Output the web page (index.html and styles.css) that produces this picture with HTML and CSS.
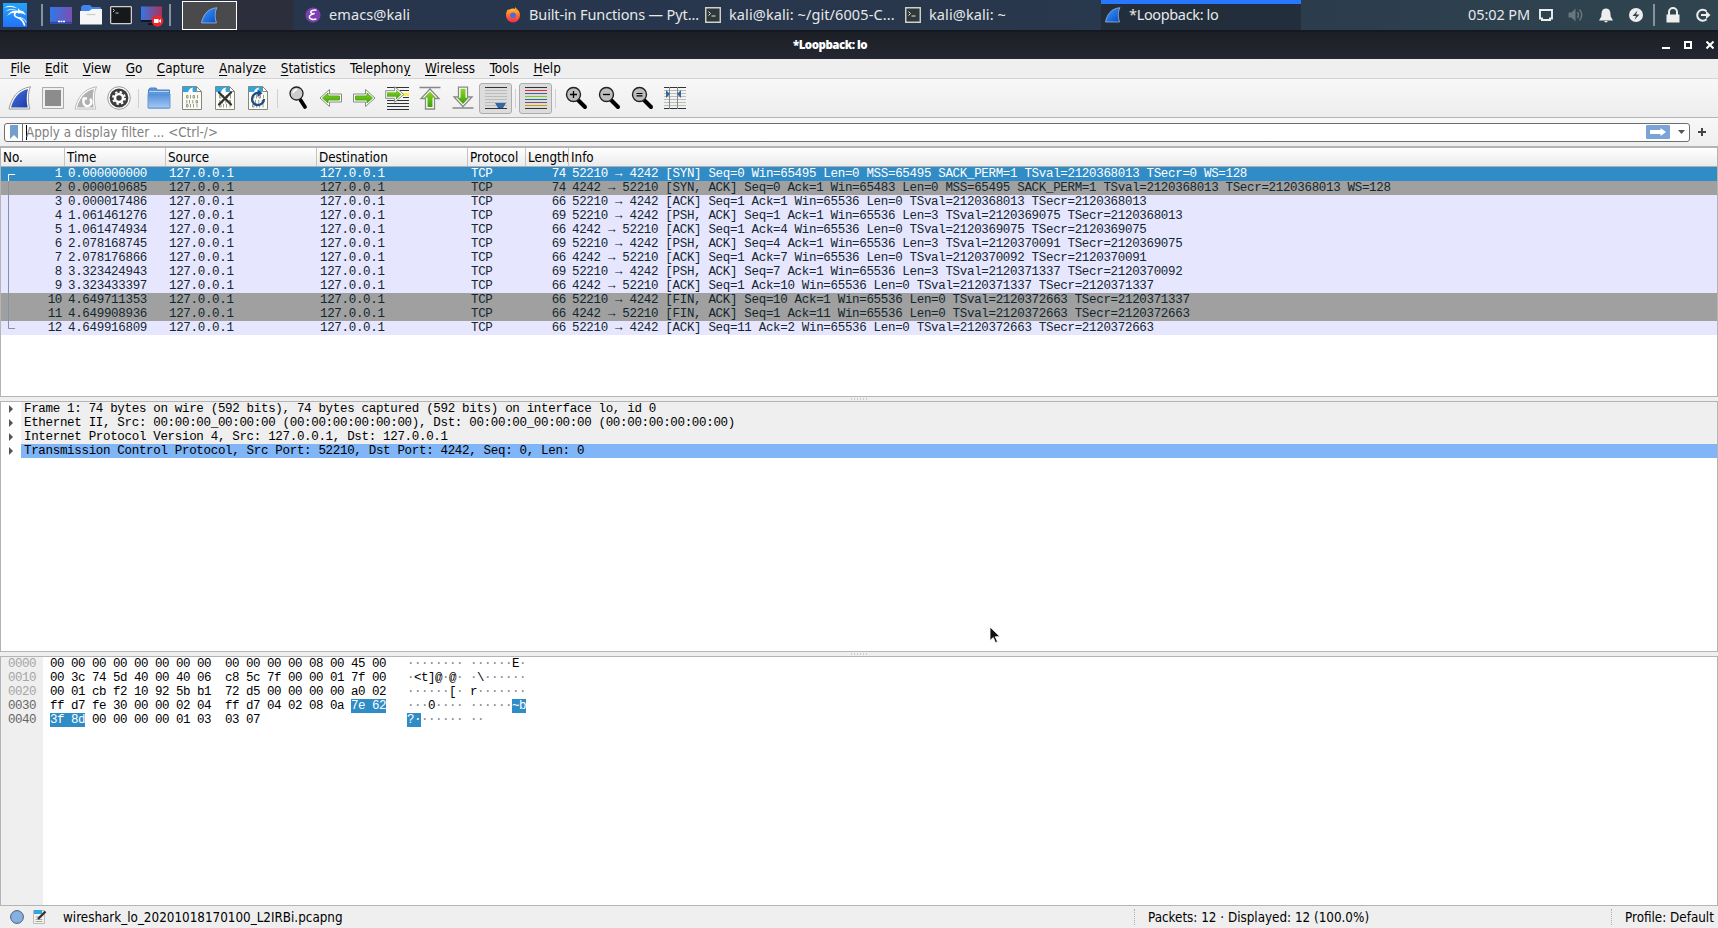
FILE: index.html
```html
<!DOCTYPE html>
<html lang="en">
<head>
    <meta charset="UTF-8">
    <title>*Loopback: lo</title>
    <link rel="stylesheet" href="styles.css">
</head>
<body>
    <!-- shared icon shapes -->
    <svg class="defs" width="0" height="0">
        <defs>
            <linearGradient id="blue" x1="0" y1="0" x2="1" y2="1"><stop offset="0" stop-color="#4a76e0"/><stop offset="1" stop-color="#1c3aa6"/></linearGradient>
            <linearGradient id="fin" x1="0" y1="0" x2="1" y2="1"><stop offset="0" stop-color="#3ea0ff"/><stop offset="1" stop-color="#0648c8"/></linearGradient>
            <linearGradient id="screen" x1="0" y1="0" x2="1" y2="0"><stop offset="0" stop-color="#3178e8"/><stop offset="1" stop-color="#7a4fb0"/></linearGradient>
            <linearGradient id="screen2" x1="0" y1="0" x2="1" y2="0"><stop offset="0" stop-color="#3178e8"/><stop offset="1" stop-color="#b03058"/></linearGradient>
            <linearGradient id="kali" x1="0" y1="0" x2="0" y2="1"><stop offset="0" stop-color="#22a4f8"/><stop offset="1" stop-color="#2272fb"/></linearGradient>
            <linearGradient id="folder" x1="0" y1="0" x2="0" y2="1"><stop offset="0" stop-color="#4f8dd8"/><stop offset="1" stop-color="#a4c8f4"/></linearGradient>
            <linearGradient id="green" x1="0" y1="0" x2="0" y2="1"><stop offset="0" stop-color="#8ad52c"/><stop offset="1" stop-color="#3fa008"/></linearGradient>
            <linearGradient id="ff" x1="0" y1="0" x2="0" y2="1"><stop offset="0" stop-color="#ffc730"/><stop offset=".5" stop-color="#ff6a2b"/><stop offset="1" stop-color="#f0284f"/></linearGradient>
            <symbol id="doc" viewBox="0 0 24 24">
                <path d="M2.500 .5h14l5 5v18h-19z" fill="#fcfcf2" stroke="#82877f"/>
                <path d="M3 1h13v5H3z" fill="#2fa5e2"/>
                <path d="M8 6.500c.5-3 2.500-4.500 5-5-.7 1.500-.6 3 0 5z" fill="#fff"/>
                <path d="M16.500 .5v5h5z" fill="#fff" stroke="#82877f"/>
            </symbol>
            <symbol id="bits" viewBox="0 0 24 24">
                <g fill="none" stroke="#7d817a" stroke-width=".8">
                    <path d="M6.500 9.500h1.500v2.500H6.500zM10.500 9v3.500M13 9.500h1.500v2.500H13zM17.500 9v3.500M6.800 14v3.500M9.500 14v3.500M12.800 14v3.500M16 14.500h1.500v2.500H16zM6.500 18.500h1.500v2.500H6.500zM10.500 18v3.500M13.500 18v3.500M17 18v3.500"/>
                </g>
            </symbol>
            <symbol id="lens" viewBox="0 0 24 24">
                <path d="M14.500 14.500l6.500 6.500" stroke="#000" stroke-width="4" stroke-linecap="round"/>
                <circle cx="9.500" cy="8.500" r="7" fill="#bdbdbd" stroke="#222" stroke-width="1.400"/>
            </symbol>
            <symbol id="arrow" viewBox="0 0 24 24">
                <path d="M1 12l9.500-8.500v4.500h12v8h-12v4.500z" fill="#fff" stroke="#888" stroke-linejoin="round"/>
                <path d="M3.500 12l5.500-5v3h11.500v4H9v3z" fill="url(#green)" stroke="#55ad10"/>
            </symbol>
            <symbol id="term" viewBox="0 0 16 16">
                <path d="M.7 .7h14.600v14.600H.7z" fill="#30393a" stroke="#cfd0cc" stroke-width="1.500"/>
                <path d="M3.500 4.500l2 2-2 2M6.500 9h4" stroke="#e8e8e8" fill="none"/>
            </symbol>
            <symbol id="sharkfin" viewBox="0 0 16 16">
                <path d="M.5 15C2 7.500 6 1.500 15 .7c-2.200 4-2.200 9-.5 14.300z" fill="url(#fin)" stroke="#9fb4cf" stroke-width=".8"/>
            </symbol>
        </defs>
    </svg>

    <div class="panel">
        <svg class="logo" width="24" height="24" viewBox="0 0 24 24"><rect width="24" height="24" fill="url(#kali)"/><g fill="#fff"><path d="M1 4.800C5 2 10 1.800 14.500 5.500 10 3.700 5 3.500 1 4.800zM2 8.500c4-3 8-3.200 12-1.500-4-.5-8 0-12 1.500zM4 13c3-5 7-6 11-5.200 3-.3 5.500 1 8 4.200-3-1.500-5-2.200-7.500-2C11 9 7 10 4 13z"/><path d="M15 5l2 2.500 3 .5 2.500 3.500-4-1.500-3.500.5z"/></g><g fill="none" stroke="#fff" stroke-linecap="round"><path d="M13 9c-2.500 2-2 4.500 1.500 5.500S20 17 21.500 22" stroke-width="1.700"/><path d="M16.500 14.500c3.500.3 5.500 2 6.500 4.500" stroke-width=".9"/></g></svg>
        <i class="bar"></i>
        <svg width="22" height="22" viewBox="0 0 22 22"><rect y="3" width="22" height="17" fill="url(#screen)"/><path d="M0 18.800h22" stroke="#3346a0" stroke-width="2"/><path d="M8 17.500h2M10.500 17.500h2M13 17.500h2" stroke="#fff" stroke-width="1.500"/></svg>
        <svg width="22" height="22" viewBox="0 0 22 22"><path d="M1 11V3l2-2h7l2 2h8l1 1v7z" fill="#3f85ee"/><path d="M0 7h9l3-2h10v15.500H0z" fill="#f6f6f6"/><path d="M6.500 10.500h9" stroke="#ccc" stroke-width="1.200"/></svg>
        <svg width="22" height="22" viewBox="0 0 22 22"><rect x=".6" y="2.600" width="20.800" height="17" rx="1" fill="#17181a" stroke="#cfcfcf" stroke-width="1.300"/><path d="M3 5l1.500 1.500L3 8M5.500 9h3" stroke="#ddd" fill="none" stroke-width=".9"/></svg>
        <svg width="24" height="24" viewBox="0 0 24 24"><rect x="1" y="3.500" width="21" height="14" fill="url(#screen2)"/><path d="M1 18h21M8 21h6" stroke="#111722" stroke-width="1.800"/><circle cx="17.500" cy="18" r="5.800" fill="#e8272f"/><path d="M14 16h4.500v4H14zM18.500 18l2.500-2v4z" fill="#fff"/></svg>
        <i class="bar last"></i>
        <div class="workspace"><svg width="17" height="17"><use href="#sharkfin"/></svg></div>
        <div class="pager"></div>
        <div class="task first"><svg width="16" height="16" viewBox="0 0 16 16"><circle cx="8" cy="8" r="7.600" fill="#7b3fb0"/><path d="M11.500 3.200C8 2.800 5.500 3.600 5.700 5s2.500 1.800 4 1.600C7 7 4 8.300 4.400 10.300c.3 2 4 2.500 7 1.700" fill="none" stroke="#fff" stroke-width="1.500"/></svg><span class="wide">emacs@kali</span></div>
        <div class="task"><svg width="16" height="16" viewBox="0 0 16 16"><circle cx="8" cy="8.500" r="7" fill="url(#ff)"/><path d="M1.500 7c0-3 1-4 1.500-5 1 2 2 2 4 2zM10 0c1.500 2 4 3 4.500 6L10 5z" fill="#ff9a2e"/><circle cx="8" cy="8.300" r="2.900" fill="#5367d8"/></svg><span>Built-in Functions — Pyt...</span></div>
        <div class="task"><svg width="16" height="16"><use href="#term"/></svg><span class="wide">kali@kali: ~/git/6005-C...</span></div>
        <div class="task"><svg width="16" height="16"><use href="#term"/></svg><span class="wide">kali@kali: ~</span></div>
        <div class="task active"><svg width="16" height="16"><use href="#sharkfin"/></svg><span>*Loopback: lo</span></div>
        <div class="tray">
            <span class="clock">05:02 PM</span>
            <svg viewBox="0 0 30 31"><path d="M9 10h12v8.500h-2v1.500h-8v-1.500H9z" fill="none" stroke="#eee" stroke-width="1.900"/></svg>
            <svg viewBox="0 0 30 31" opacity=".3"><path d="M7.500 12.500h3l4-4v13l-4-4h-3z" fill="#eee"/><path d="M16.500 12q2 3 0 6M18.500 9.500q4.500 5.500 0 11" fill="none" stroke="#eee" stroke-width="1.500"/></svg>
            <svg viewBox="0 0 30 31"><path d="M15 8.500c4.500 0 4.500 4.500 4.700 8l2.300 4H8l2.300-4c.2-3.500.2-8 4.700-8zM13 21h4l-2 1.800z" fill="#eee"/></svg>
            <svg viewBox="0 0 30 31"><circle cx="15" cy="15" r="7" fill="#eee"/><path d="M16.500 10.500L11.500 16H15l-1.500 3.700 5-5.200H15z" fill="#2e414e"/></svg>
            <i class="bar"></i>
            <svg viewBox="0 0 30 31"><path d="M8.500 14.500h13v8h-13z" fill="#eee"/><path d="M11 15v-3a4 4 0 0 1 8 0v3" fill="none" stroke="#eee" stroke-width="2"/></svg>
            <svg viewBox="0 0 30 31"><path d="M18.500 11.200a5.500 5.500 0 1 0 0 8" fill="none" stroke="#eee" stroke-width="2"/><path d="M13 14h5v-3l4.500 4-4.500 4v-3h-5z" fill="#eee"/></svg>
        </div>
    </div>

    <div class="titlebar">
        <b>*Loopback: lo</b>
        <div class="buttons">
            <svg width="8" height="8"><path d="M0 7h8" stroke="#fff" stroke-width="2"/></svg>
            <svg width="8" height="8"><path d="M1 1h6v6H1z" fill="none" stroke="#fff" stroke-width="2"/></svg>
            <svg width="8" height="8"><path d="M.5.5l7 7M7.500.5l-7 7" stroke="#fff" stroke-width="2"/></svg>
        </div>
    </div>

    <div class="menubar">
        <span><u>F</u>ile</span><span><u>E</u>dit</span><span><u>V</u>iew</span><span><u>G</u>o</span><span><u>C</u>apture</span><span><u>A</u>nalyze</span><span><u>S</u>tatistics</span><span>Telephon<u>y</u></span><span><u>W</u>ireless</span><span><u>T</u>ools</span><span><u>H</u>elp</span>
    </div>

    <div class="toolbar">
        <div class="tool"><svg viewBox="0 0 24 24"><path d="M1 23C3.500 12 9 3 22.500 .8c-2.700 6-2.700 14-.8 22.200z" fill="#fff" stroke="#999"/><path d="M3 21.500C5.500 12 11 5 20 3c-1.500 5.500-1.700 12-.3 18.500z" fill="url(#blue)"/></svg></div>
        <div class="tool"><svg viewBox="0 0 24 24"><path d="M1.500 1.500h21v21h-21z" fill="#f0f0f0" stroke="#aaa"/><path d="M4 4h16v16H4z" fill="#8c8c8c"/></svg></div>
        <div class="tool"><svg viewBox="0 0 24 24"><path d="M1 23C3.500 12 9 3 22.500 .8c-2.700 6-2.700 14-.8 22.200z" fill="#fff" stroke="#bbb"/><path d="M3 21.500C5.500 12 11 5 20 3c-1.500 5.500-1.700 12-.3 18.500z" fill="#b0b0b0"/><path d="M9.500 12v3.500a4 4 0 1 0 6.500-2.500M9 12.500h4" fill="none" stroke="#fff" stroke-width="2.400"/></svg></div>
        <div class="tool"><svg viewBox="0 0 24 24"><circle cx="12" cy="12" r="11.300" fill="#fff" stroke="#999"/><circle cx="12" cy="12" r="9.400" fill="#3a3c3e"/><circle cx="12" cy="12" r="4" fill="none" stroke="#fff" stroke-width="2.600"/><circle cx="12" cy="12" r="6" fill="none" stroke="#fff" stroke-width="1.900" stroke-dasharray="2.400 2.312"/></svg></div>
        <i class="sep"></i>
        <div class="tool"><svg viewBox="0 0 24 24"><path d="M1.500 22V4l1.500-2h6l1.500 2h12v18z" fill="#5a96dc" stroke="#4a80c0"/><path d="M1 7.500h22V22H1z" fill="url(#folder)" stroke="#6699d8"/><path d="M2 5.500h20" stroke="#b8d3f3"/></svg></div>
        <div class="tool"><svg viewBox="0 0 24 24"><use href="#doc"/><use href="#bits"/></svg></div>
        <div class="tool"><svg viewBox="0 0 24 24"><use href="#doc"/><use href="#bits"/><path d="M6 6.500l12 12M18 6.500l-12 12" stroke="#2e3436" stroke-width="2.300" stroke-linecap="round"/></svg></div>
        <div class="tool"><svg viewBox="0 0 24 24"><use href="#doc"/><use href="#bits"/><path d="M18 13a6 6 0 1 1-6-6" fill="none" stroke="#204a87" stroke-width="2.300"/><path d="M11.500 3.500l5 3.800-5 3.500z" fill="#204a87"/></svg></div>
        <i class="sep"></i>
        <div class="tool"><svg viewBox="0 0 24 24"><path d="M14.500 14l4.500 7" stroke="#000" stroke-width="3.800" stroke-linecap="round"/><circle cx="10.500" cy="7.500" r="6.500" fill="#ccc" stroke="#222" stroke-width="1.300"/><path d="M7 7q1-3 4-3.500" fill="none" stroke="#fff" stroke-width="1.500"/></svg></div>
        <div class="tool"><svg viewBox="0 0 24 24"><use href="#arrow"/></svg></div>
        <div class="tool"><svg viewBox="0 0 24 24"><use href="#arrow" transform="matrix(-1 0 0 1 24 0)"/></svg></div>
        <div class="tool"><svg viewBox="0 0 24 24"><path d="M2 1.500h22M2 14.500h22M2 17.500h22M2 20.500h22M2 23.500h22M15 4.500h9M18 11.500h6" stroke="#2e3436"/><path d="M18 8.500h6" stroke="#fce94f" stroke-width="3"/><path d="M.7 4.700h9V.7l9 7.800-9 7.800v-4h-9z" fill="#fff" stroke="#888"/><path d="M2 6.200h9V3.500l5.500 5-5.500 5v-2.700H2z" fill="url(#green)"/></svg></div>
        <div class="tool"><svg viewBox="0 0 24 24"><path d="M1.500 1.500h21M12 3l9 9.500h-4.500v10.500h-9v-10.500H3z" fill="#fff" stroke="#888" stroke-width="1.300"/><path d="M12 5.500l6 6.200h-3.500V21h-5v-9.300H6z" fill="url(#green)"/></svg></div>
        <div class="tool"><svg viewBox="0 0 24 24"><path d="M1.500 22h21M12 20.500l9-9.500h-4.500V1.200h-9V11H3z" fill="#fff" stroke="#888" stroke-width="1.300"/><path d="M12 18l6-6.200h-3.500V2.700h-5v9.100H6z" fill="url(#green)"/></svg></div>
        <div class="tool pressed"><svg viewBox="0 0 24 24"><path d="M1 4.500h22M1 7.500h22M1 10.500h22M1 13.500h22M1 16.500h22M1 19.500h22" stroke="#babdb6"/><path d="M1 1.500h22M1 22.500h22" stroke="#2e3436"/><path d="M11 17h11l-3 5h-5z" fill="#3465a4"/></svg></div>
        <i class="sep"></i>
        <div class="tool pressed"><svg viewBox="0 0 24 24"><path d="M1 1.500h22M1 22.500h22" stroke="#2e3436"/><path d="M1 4.500h22" stroke="#ef2929"/><path d="M1 7.500h22" stroke="#3465a4"/><path d="M1 10.500h22" stroke="#73d216"/><path d="M1 13.500h22" stroke="#3465a4"/><path d="M1 16.500h22" stroke="#75507b"/><path d="M1 19.500h22" stroke="#c4a000"/></svg></div>
        <i class="sep"></i>
        <div class="tool"><svg viewBox="0 0 24 24"><use href="#lens"/><path d="M6 8.500h7M9.500 5v7" stroke="#000" stroke-width="1.300"/></svg></div>
        <div class="tool"><svg viewBox="0 0 24 24"><use href="#lens"/><path d="M6 8.500h7" stroke="#000" stroke-width="1.300"/></svg></div>
        <div class="tool"><svg viewBox="0 0 24 24"><use href="#lens"/><path d="M6.500 7.500h6M6.500 9.800h6" stroke="#000" stroke-width="1.200"/></svg></div>
        <div class="tool"><svg viewBox="0 0 24 24"><path d="M1 4.500h22M1 7.500h22M1 10.500h22M1 13.500h22M1 16.500h22M1 19.500h22" stroke="#babdb6"/><path d="M1 1.500h22M1 22.500h22" stroke="#2e3436"/><path d="M6.500 1v22M14.500 1v22" stroke="#888a85"/><path d="M3 4l4 4-4 4zM18 4l-4 4 4 4z" fill="#3465a4"/></svg></div>
    </div>

    <div class="filterbar">
        <div class="filter">
            <div class="bookmark"><svg width="8" height="14"><path d="M0 0h8v14l-4-4-4 4z" fill="#729fcf"/></svg></div>
            <div class="placeholder">Apply a display filter ... &lt;Ctrl-/&gt;</div>
            <div class="apply"><svg width="16" height="8"><path d="M0 2h10.500V0L16 4l-5.500 4V6H0z" fill="#fff"/></svg></div>
            <svg class="drop" width="7" height="4"><path d="M0 0h7L3.500 4z" fill="#555"/></svg>
        </div>
        <svg class="plus" width="8" height="8"><path d="M0 4h8M4 0v8" stroke="#444" stroke-width="2"/></svg>
    </div>

    <div class="packets">
        <div class="head"><span>No.</span><span>Time</span><span>Source</span><span>Destination</span><span>Protocol</span><span>Length</span><span>Info</span></div>
        <div id="rows"></div>
        <svg class="stream" width="8" height="156"><path d="M.5 8v147.500H7" fill="none" stroke="#8592a0"/><path d="M7 1.500H.5V8" fill="none" stroke="#fff"/></svg>
    </div>

    <div class="splitter"></div>

    <div class="details">
        <div class="node"><i></i><span>Frame 1: 74 bytes on wire (592 bits), 74 bytes captured (592 bits) on interface lo, id 0</span></div>
        <div class="node"><i></i><span>Ethernet II, Src: 00:00:00_00:00:00 (00:00:00:00:00:00), Dst: 00:00:00_00:00:00 (00:00:00:00:00:00)</span></div>
        <div class="node"><i></i><span>Internet Protocol Version 4, Src: 127.0.0.1, Dst: 127.0.0.1</span></div>
        <div class="node selected"><i></i><span>Transmission Control Protocol, Src Port: 52210, Dst Port: 4242, Seq: 0, Len: 0</span></div>
    </div>

    <div class="splitter"></div>

    <div class="bytes">
<pre class="offsets">0000
0010
0020
<b>0030
0040</b></pre>
<pre class="hex">00 00 00 00 00 00 00 00  00 00 00 00 08 00 45 00
00 3c 74 5d 40 00 40 06  c8 5c 7f 00 00 01 7f 00
00 01 cb f2 10 92 5b b1  72 d5 00 00 00 00 a0 02
ff d7 fe 30 00 00 02 04  ff d7 04 02 08 0a <mark>7e 62</mark>
<mark>3f 8d</mark> 00 00 00 00 01 03  03 07</pre>
<pre class="ascii">········ ······<b>E</b>·
·<b>&lt;t]@</b>·<b>@</b>· ·<b>\</b>······
······<b>[</b>· <b>r</b>·······
···<b>0</b>···· ······<mark>~b</mark>
<mark>?·</mark>······ ··</pre>
    </div>

    <div class="statusbar">
        <svg width="14" height="14"><circle cx="7" cy="7" r="6.400" fill="#86afe2" stroke="#4c5f7c"/></svg>
        <svg class="note" width="14" height="14" viewBox="0 0 14 14"><path d="M.5 .5h11v13H.5z" fill="#f4f4ec" stroke="#bbb"/><path d="M1 0h8v4H1z" fill="#2fa5e2"/><path d="M2.500 7h6M2.500 9.500h7M2.500 11.500h7" stroke="#aaa"/><path d="M5 9l7.500-7.500" stroke="#333" stroke-width="2.400"/></svg>
        <span class="file">wireshark_lo_20201018170100_L2IRBi.pcapng</span>
        <span class="count">Packets: 12 · Displayed: 12 (100.0%)</span>
        <span class="profile">Profile: Default</span>
    </div>

    <svg class="cursor" width="12" height="18"><path d="M1 1v13.500l3.300-3 2.200 5.200 2-1-2.200-5H11z" fill="#111" stroke="#fff" stroke-width=".8"/></svg>

    <script>
        // time, length, info, row colour
        const packets = [
            ['0.000000000', 74, '52210 → 4242 [SYN] Seq=0 Win=65495 Len=0 MSS=65495 SACK_PERM=1 TSval=2120368013 TSecr=0 WS=128', 'selected'],
            ['0.000010685', 74, '4242 → 52210 [SYN, ACK] Seq=0 Ack=1 Win=65483 Len=0 MSS=65495 SACK_PERM=1 TSval=2120368013 TSecr=2120368013 WS=128', 'gray'],
            ['0.000017486', 66, '52210 → 4242 [ACK] Seq=1 Ack=1 Win=65536 Len=0 TSval=2120368013 TSecr=2120368013', ''],
            ['1.061461276', 69, '52210 → 4242 [PSH, ACK] Seq=1 Ack=1 Win=65536 Len=3 TSval=2120369075 TSecr=2120368013', ''],
            ['1.061474934', 66, '4242 → 52210 [ACK] Seq=1 Ack=4 Win=65536 Len=0 TSval=2120369075 TSecr=2120369075', ''],
            ['2.078168745', 69, '52210 → 4242 [PSH, ACK] Seq=4 Ack=1 Win=65536 Len=3 TSval=2120370091 TSecr=2120369075', ''],
            ['2.078176866', 66, '4242 → 52210 [ACK] Seq=1 Ack=7 Win=65536 Len=0 TSval=2120370092 TSecr=2120370091', ''],
            ['3.323424943', 69, '52210 → 4242 [PSH, ACK] Seq=7 Ack=1 Win=65536 Len=3 TSval=2120371337 TSecr=2120370092', ''],
            ['3.323433397', 66, '4242 → 52210 [ACK] Seq=1 Ack=10 Win=65536 Len=0 TSval=2120371337 TSecr=2120371337', ''],
            ['4.649711353', 66, '52210 → 4242 [FIN, ACK] Seq=10 Ack=1 Win=65536 Len=0 TSval=2120372663 TSecr=2120371337', 'gray'],
            ['4.649908936', 66, '4242 → 52210 [FIN, ACK] Seq=1 Ack=11 Win=65536 Len=0 TSval=2120372663 TSecr=2120372663', 'gray'],
            ['4.649916809', 66, '52210 → 4242 [ACK] Seq=11 Ack=2 Win=65536 Len=0 TSval=2120372663 TSecr=2120372663', '']
        ];
        const rows = document.getElementById('rows');
        packets.forEach(([time, length, info, color], i) => {
            const row = document.createElement('div');
            row.className = 'row ' + color;
            for (const text of [i + 1, time, '127.0.0.1', '127.0.0.1', 'TCP', length, info]) {
                const cell = document.createElement('span');
                cell.textContent = text;
                row.appendChild(cell);
            }
            rows.appendChild(row);
        });
    </script>
</body>
</html>
```
FILE: styles.css
```css
* {
    box-sizing: border-box;
}
body {
    margin: 0;
    height: 928px;
    display: flex;
    flex-direction: column;
    overflow: hidden;
    background: #efefef;
    color: #000;
    font: 13.33px "DejaVu Sans Condensed", "DejaVu Sans", sans-serif;
}
svg {
    display: block;
    flex: none;
}
.defs {
    position: absolute;
}

/* desktop panel */
.panel {
    height: 32px;
    flex: none;
    display: flex;
    align-items: center;
    padding-left: 3px;
    background: linear-gradient(90deg, #27354d, #28374c 60%, #30454f);
    border-bottom: 2px solid #15181f;
    color: #e6e8ea;
    font: 14.5px/20px "Noto Sans", sans-serif;
}
.panel > svg {
    margin-right: 8px;
}
.panel > svg.logo {
    margin-right: 14px;
}
.bar {
    width: 2px;
    height: 22px;
    background: #8a919c;
    margin-right: 7px;
    flex: none;
}
.bar.last {
    margin: 0 11px 0 -3px;
}
.workspace {
    width: 55px;
    height: 29px;
    display: flex;
    align-items: center;
    justify-content: center;
    background: #4a4a4c;
    border: 1px solid #fff;
}
.pager {
    width: 56px;
    height: 30px;
    background: #2c2e3b;
}
.task {
    width: 200px;
    height: 30px;
    flex: none;
    display: flex;
    align-items: center;
    gap: 8px;
    padding-left: 4px;
    white-space: nowrap;
    letter-spacing: -.13px;
}
.task span, .clock {
    padding-bottom: 2px;
}
.task.first {
    width: 208px;
    padding-left: 12px;
}
.task .wide {
    letter-spacing: .1px;
}
.task.active {
    background: #222e3b;
    border-top: 4px solid #2777ff;
    padding-bottom: 4px;
    letter-spacing: -.35px;
}
.tray {
    flex: 1;
    display: flex;
    align-items: center;
    justify-content: flex-end;
}
.tray svg {
    width: 30px;
    height: 31px;
}
.clock {
    margin-right: 2px;
    letter-spacing: -.1px;
}
.tray .bar {
    margin: 0 3px 0 2px;
}
.tray svg:first-of-type {
    margin-left: -1px;
}

/* window title */
.titlebar {
    height: 27px;
    flex: none;
    display: flex;
    align-items: center;
    background: linear-gradient(#1d1f27, #242731);
    color: #fff;
    padding: 0 4px 1px 0;
    font: bold 11.5px/16px "Noto Sans", sans-serif;
}
.titlebar b {
    flex: 1;
    padding-left: 793px;
    letter-spacing: -.5px;
}
.buttons {
    display: flex;
    gap: 14px;
}

.menubar {
    height: 20px;
    flex: none;
    display: flex;
    gap: 14.500px;
    padding-left: 10.500px;
    line-height: 20px;
    border-bottom: 1px solid #d3d3d3;
}
.menubar u {
    text-underline-offset: 2px;
}
.toolbar {
    height: 39px;
    flex: none;
    display: flex;
    align-items: center;
    padding-left: 3px;
    background: linear-gradient(#f8f8f8, #ededed);
    border-bottom: 1px solid #b4b4b4;
}
.tool {
    width: 33px;
    height: 31px;
    display: flex;
    align-items: center;
    justify-content: center;
}
.tool svg {
    width: 24px;
    height: 24px;
}
.tool.pressed {
    background: #dcdcdc;
    border: 1px solid #acacac;
    border-radius: 3px;
}
.sep {
    width: 1px;
    height: 19px;
    margin: 0 3px;
    background: #d0d0d0;
}

.filterbar {
    height: 28px;
    flex: none;
    display: flex;
    align-items: center;
    padding: 0 12px 0 4px;
    background: linear-gradient(#f8f8f8, #efefef);
}
.filter {
    flex: 1;
    height: 19px;
    display: flex;
    align-items: center;
    background: #fff;
    border: 1px solid #6e6e6e;
    border-radius: 3px;
}
.bookmark {
    width: 18px;
    height: 17px;
    display: flex;
    align-items: center;
    justify-content: center;
    border-right: 1px solid #6e6e6e;
}
.placeholder {
    flex: 1;
    height: 15px;
    line-height: 16px;
    margin-left: 3px;
    border-left: 1px solid #000;
    color: #808080;
    text-indent: -1px;
}
.apply {
    width: 24px;
    height: 14px;
    display: flex;
    align-items: center;
    justify-content: center;
    background: #7ba4d6;
    border-radius: 1px;
}
.drop {
    margin: 0 4px 0 8px;
}
.plus {
    margin-left: 8px;
}

/* packet list */
.packets {
    position: relative;
    height: 251px;
    flex: none;
    border: 1px solid #b4b4b4;
    border-top-width: 2px;
    background: #fff;
}
.head, .row {
    display: grid;
    grid-template-columns: 64px 101px 151px 151px 58px 43px 1fr;
}
.head {
    height: 19px;
    line-height: 20px;
    background: linear-gradient(#fff, #ebebeb);
    border-bottom: 1px solid #b0b0b0;
}
.head span {
    height: 18px;
    padding-left: 2px;
    border-right: 1px solid #c4c4c4;
    overflow: hidden;
    white-space: nowrap;
}
.head span:last-child {
    border: 0;
}
.row {
    height: 14px;
    line-height: 14px;
    background: #e7e6ff;
    color: #12272e;
    font-family: "Liberation Mono", monospace;
    font-size: 12.5px;
    letter-spacing: -.32px;
    white-space: pre;
}
.row span {
    padding: 0 3px;
}
.row span:nth-child(1), .row span:nth-child(6) {
    text-align: right;
}
.row.gray {
    background: #a0a0a0;
}
.row.selected {
    background: #308cc6;
    color: #fff;
}
.stream {
    position: absolute;
    left: 7px;
    top: 25px;
}

.splitter {
    height: 4px;
    flex: none;
    background: repeating-linear-gradient(90deg, #ccc 0 1px, transparent 1px 3px) center / 16px 2px no-repeat;
}

/* protocol tree */
.details {
    height: 251px;
    flex: none;
    border: 1px solid #b4b4b4;
    background: #fff;
    font-family: "Liberation Mono", monospace;
    font-size: 12.5px;
    letter-spacing: -.32px;
}
.node {
    height: 14px;
    line-height: 14px;
    display: flex;
    align-items: center;
}
.node i {
    margin: 0 8px;
    border-left: 4px solid #555;
    border-top: 4px solid transparent;
    border-bottom: 4px solid transparent;
}
.node span {
    flex: 1;
    padding-left: 3px;
    background: #efefef;
}
.node.selected span {
    background: #80b5f7;
}

/* hex dump */
.bytes {
    flex: 1;
    display: flex;
    border: 1px solid #b4b4b4;
    background: #fff;
}
.bytes pre {
    margin: 0;
    font-family: "Liberation Mono", monospace;
    font-size: 12.5px;
    line-height: 14px;
    letter-spacing: -.5px;
}
.bytes b {
    font-weight: normal;
}
.bytes mark {
    display: inline-block;
    height: 14px;
    background: #308cc6;
    color: #fff;
}
.offsets {
    width: 42px;
    padding-left: 7px;
    background: #efefef;
    color: #a5a5a5;
}
.offsets b {
    color: #666;
}
.hex {
    width: 364px;
    padding-left: 7px;
}
.ascii {
    color: #888;
}
.ascii b {
    color: #000;
}

.statusbar {
    height: 22px;
    flex: none;
    display: flex;
    align-items: center;
    padding-left: 10px;
    white-space: nowrap;
}
.note {
    margin-left: 9px;
}
.file {
    flex: 1;
    margin-left: 16px;
    padding-top: 1px;
}
.count, .profile {
    border-left: 1px dotted #b0b0b0;
    padding-left: 13px;
    line-height: 14px;
    padding-top: 2px;
}
.count {
    width: 477px;
}
.profile {
    width: 107px;
}
.cursor {
    position: absolute;
    left: 989px;
    top: 626px;
}
```
